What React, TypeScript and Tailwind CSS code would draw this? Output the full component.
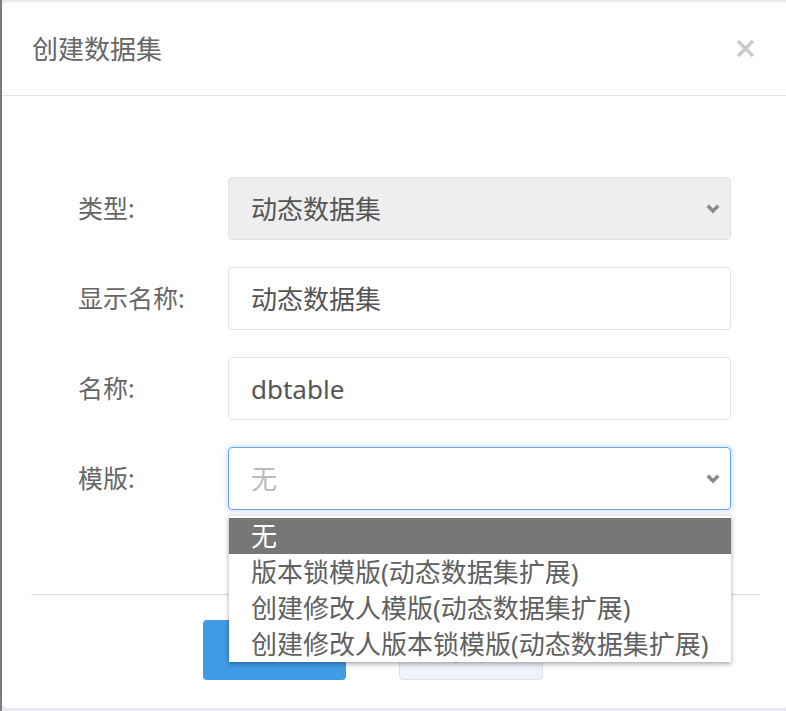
import { useState } from "react";

// Opcoes do select de modelo (dropdown aberto)
const templates = [
  "无",
  "版本锁模版(动态数据集扩展)",
  "创建修改人模版(动态数据集扩展)",
  "创建修改人版本锁模版(动态数据集扩展)",
];

// Seta do select
function Chevron() {
  return (
    <svg width="14" height="11" viewBox="0 0 14 11" className="shrink-0">
      <polyline points="1.8,2.8 7,8 12.2,2.8" fill="none" stroke="#888888" strokeWidth="3.4" />
    </svg>
  );
}

// Linha do formulario: label + campo
function Row({ label, children }: { label: string; children: React.ReactNode }) {
  return (
    <div className="flex items-center h-[63px]">
      <label className="w-[150px] shrink-0 text-[25px] leading-none text-[#666]">{label}</label>
      <div className="relative flex-1">{children}</div>
    </div>
  );
}

export default function App() {
  const [selected] = useState(0); // item destacado no dropdown

  return (
    <div
      className="w-[786px] h-[711px] overflow-hidden bg-[#e7eaf0] border-l-2 border-[#7c7c7c] pt-[2px]"
      style={{ fontFamily: "'Noto Sans', 'Noto Sans CJK SC', sans-serif" }}
    >
      <div className="w-[787px] bg-white rounded-[6px]">
        {/* Cabecalho */}
        <div className="h-[94px] flex items-center justify-between pl-[30px] pr-[34px] border-b border-[#e2e5ec]">
          <h1 className="text-[26px] leading-none text-[#666] font-normal">创建数据集</h1>
          <svg width="19" height="19" viewBox="0 0 19 19">
            <path d="M2 2 L17 17 M17 2 L2 17" stroke="#c9c9c9" strokeWidth="3.4" />
          </svg>
        </div>

        {/* Formulario */}
        <div className="pt-[81px] pb-[84px] pl-[76px] pr-[58px] flex flex-col gap-[27px]">
          <Row label="类型:">
            <div className="h-[63px] flex items-center justify-between pl-[22px] pr-[10px] bg-[#eeeeee] border border-[#e1e4ea] rounded-[4px]">
              <span className="text-[26px] leading-none text-[#555]">动态数据集</span>
              <Chevron />
            </div>
          </Row>
          <Row label="显示名称:">
            <div className="h-[63px] flex items-center pl-[22px] border border-[#e1e4ea] rounded-[4px]">
              <span className="text-[26px] leading-none text-[#555]">动态数据集</span>
            </div>
          </Row>
          <Row label="名称:">
            <div className="h-[63px] flex items-center pl-[22px] border border-[#e1e4ea] rounded-[4px]">
              <span className="text-[26px] leading-none text-[#555]">dbtable</span>
            </div>
          </Row>
          <Row label="模版:">
            <div className="h-[63px] flex items-center justify-between pl-[22px] pr-[10px] border border-[#66a3f2] rounded-[4px] shadow-[0_0_6px_rgba(102,163,242,0.45)]">
              <span className="text-[26px] leading-none text-[#bbbbbb]">无</span>
              <Chevron />
            </div>
            {/* Dropdown aberto por cima */}
            <ul className="absolute z-10 top-[68px] left-[1px] right-0 bg-white border-t border-[#e6e6e6] pt-[2px] shadow-[0_2px_5px_rgba(0,0,0,0.35)]">
              {templates.map((t, i) => (
                <li
                  key={t}
                  className={
                    i === selected
                      ? "h-[36px] flex items-center pl-[22px] text-[26px] leading-none bg-[#777777] text-white"
                      : "h-[36px] flex items-center pl-[22px] text-[26px] leading-none text-[#606060]"
                  }
                >
                  {t}
                </li>
              ))}
            </ul>
          </Row>
        </div>

        {/* Rodape com botoes */}
        <div className="mx-[29px] border-t border-[#dcdcdc] pt-[25px] pb-[28px] flex gap-[53px] pl-[172px]">
          <button className="w-[143px] h-[60px] rounded-[4px] bg-[#409be6] text-white text-[25px] leading-none">确定</button>
          <button className="w-[144px] h-[60px] rounded-[4px] bg-[#eef3fc] border border-[#d9e2f0] text-[#333] text-[25px] leading-none">取消</button>
        </div>
      </div>
    </div>
  );
}
